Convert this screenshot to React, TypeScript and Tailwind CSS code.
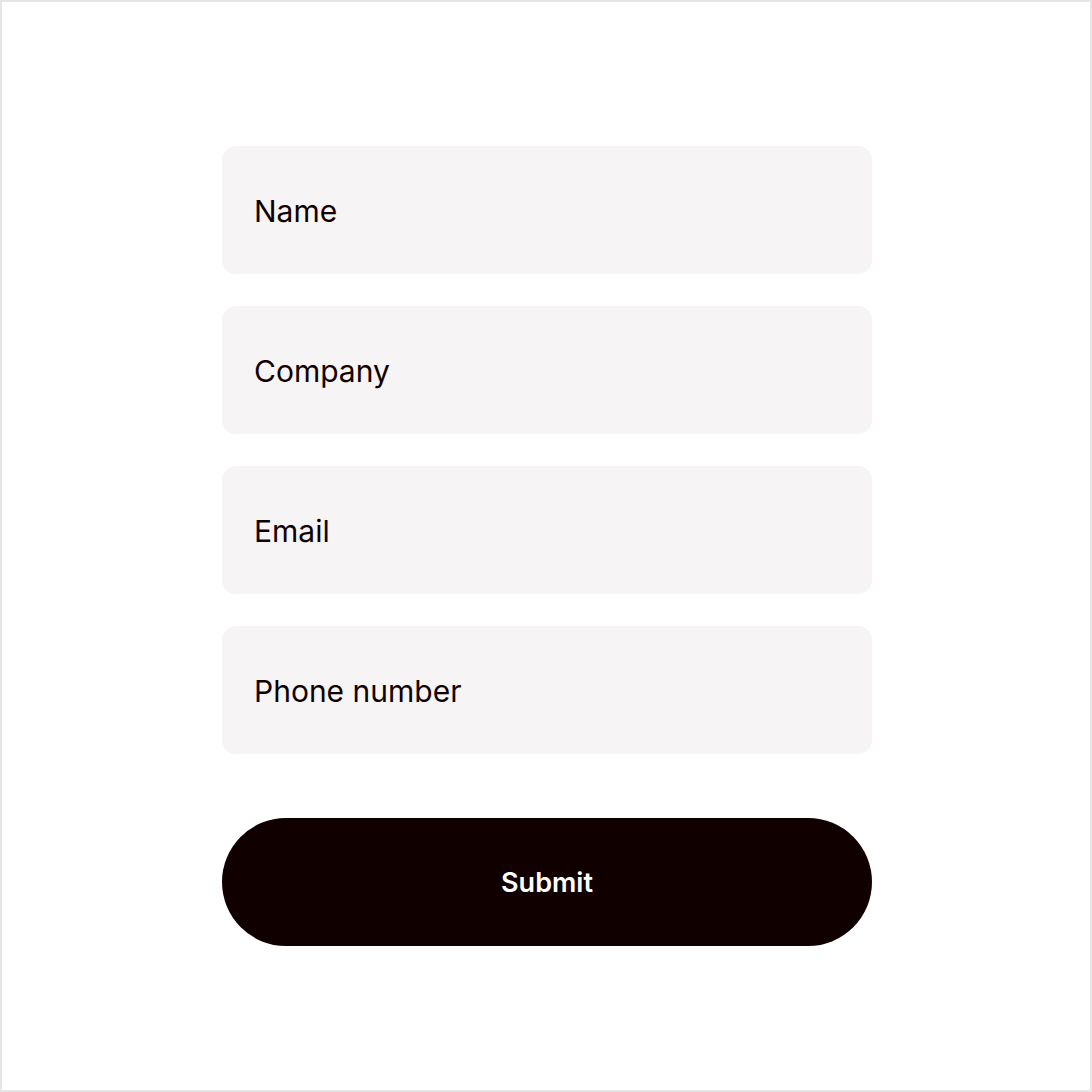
export default function App() {
  const fields = ["Name", "Company", "Email", "Phone number"];
  return (
    <div
      className="w-[1092px] h-[1092px] box-border border-2 border-[#e6e6e6] bg-white flex items-center justify-center pl-[2px]"
      style={{ fontFamily: "Inter, 'Liberation Sans', sans-serif" }}
    >
      <div className="w-[650px] flex flex-col">
        <div className="flex flex-col gap-[32px]">
          {fields.map((f) => (
            <div
              key={f}
              className="h-[128px] rounded-[14px] bg-[#f6f4f5] flex items-center px-[32px] pt-[2px] text-[30px] text-[#100000]"
            >
              {f}
            </div>
          ))}
        </div>
        <button className="mt-[64px] h-[128px] rounded-full bg-[#100000] text-white text-[27px] font-semibold flex items-center justify-center pt-[2px]">
          Submit
        </button>
      </div>
    </div>
  );
}
